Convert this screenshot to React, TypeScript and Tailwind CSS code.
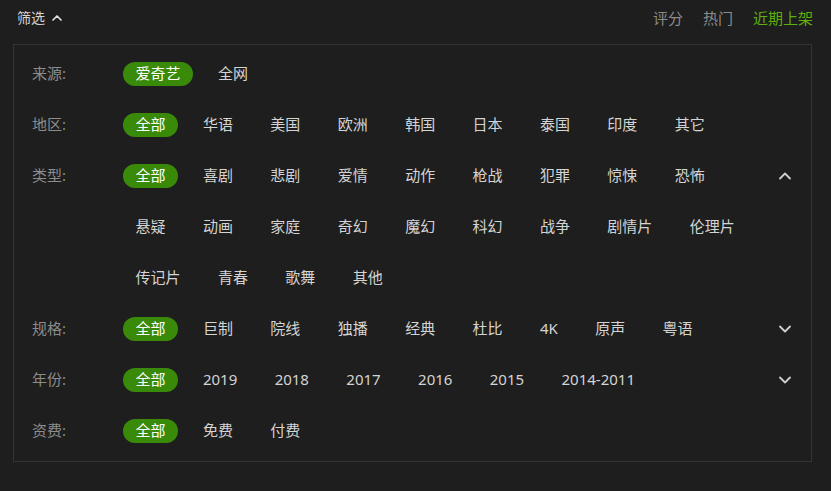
import { ChevronDown, ChevronUp } from "lucide-react";

type Row = {
  label: string;
  items: string[];
  active: number;
  toggle?: "up" | "down";
};

const rows: Row[] = [
  { label: "来源:", items: ["爱奇艺", "全网"], active: 0 },
  {
    label: "地区:",
    items: ["全部", "华语", "美国", "欧洲", "韩国", "日本", "泰国", "印度", "其它"],
    active: 0,
  },
  {
    label: "类型:",
    items: [
      "全部", "喜剧", "悲剧", "爱情", "动作", "枪战", "犯罪", "惊悚", "恐怖",
      "悬疑", "动画", "家庭", "奇幻", "魔幻", "科幻", "战争", "剧情片", "伦理片",
      "传记片", "青春", "歌舞", "其他",
    ],
    active: 0,
    toggle: "up",
  },
  {
    label: "规格:",
    items: ["全部", "巨制", "院线", "独播", "经典", "杜比", "4K", "原声", "粤语"],
    active: 0,
    toggle: "down",
  },
  {
    label: "年份:",
    items: ["全部", "2019", "2018", "2017", "2016", "2015", "2014-2011"],
    active: 0,
    toggle: "down",
  },
  { label: "资费:", items: ["全部", "免费", "付费"], active: 0 },
];

function FilterRow({ row }: { row: Row }) {
  return (
    <div className="flex">
      <div className="w-[91px] h-[51px] flex items-center text-[#8c8c8c] shrink-0">
        {row.label}
      </div>
      <div className="w-[640px] flex flex-wrap gap-x-[12.4px]">
        {row.items.map((item, i) => (
          <div key={item} className="h-[51px] flex items-center">
            <span
              className={
                i === row.active
                  ? "h-6 px-[12.5px] rounded-full bg-[#3a8a0a] text-white flex items-center"
                  : "h-6 px-[12.5px] text-[#d4d4d4] flex items-center"
              }
            >
              {item}
            </span>
          </div>
        ))}
      </div>
      <div className="flex-1 h-[51px] flex items-center justify-end pr-[16px]">
        {row.toggle === "up" && (
          <ChevronUp size={20} strokeWidth={2.2} className="text-[#d0d0d0]" />
        )}
        {row.toggle === "down" && (
          <ChevronDown size={20} strokeWidth={2.2} className="text-[#d0d0d0]" />
        )}
      </div>
    </div>
  );
}

export default function App() {
  return (
    <div
      className="w-[831px] h-[491px] bg-[#1e1e1e] pl-[13px] pr-[19px] text-[15px]"
      style={{ fontFamily: '"Noto Sans", "Noto Sans CJK SC", sans-serif' }}
    >
      <div className="h-9 mb-2 flex items-center justify-between">
        <div className="flex items-center gap-1 pl-1 text-[#d4d4d4] text-sm">
          <span>筛选</span>
          <ChevronUp size={16} strokeWidth={2.6} className="text-[#e0e0e0]" />
        </div>
        <div className="flex items-center gap-5 -mr-px">
          <span className="text-[#8c8c8c]">评分</span>
          <span className="text-[#8c8c8c]">热门</span>
          <span className="text-[#5fb00c]">近期上架</span>
        </div>
      </div>
      <div className="border border-[#343434] pt-[3px] pb-[5px] pl-[18px]">
        {rows.map((row) => (
          <FilterRow key={row.label} row={row} />
        ))}
      </div>
    </div>
  );
}
